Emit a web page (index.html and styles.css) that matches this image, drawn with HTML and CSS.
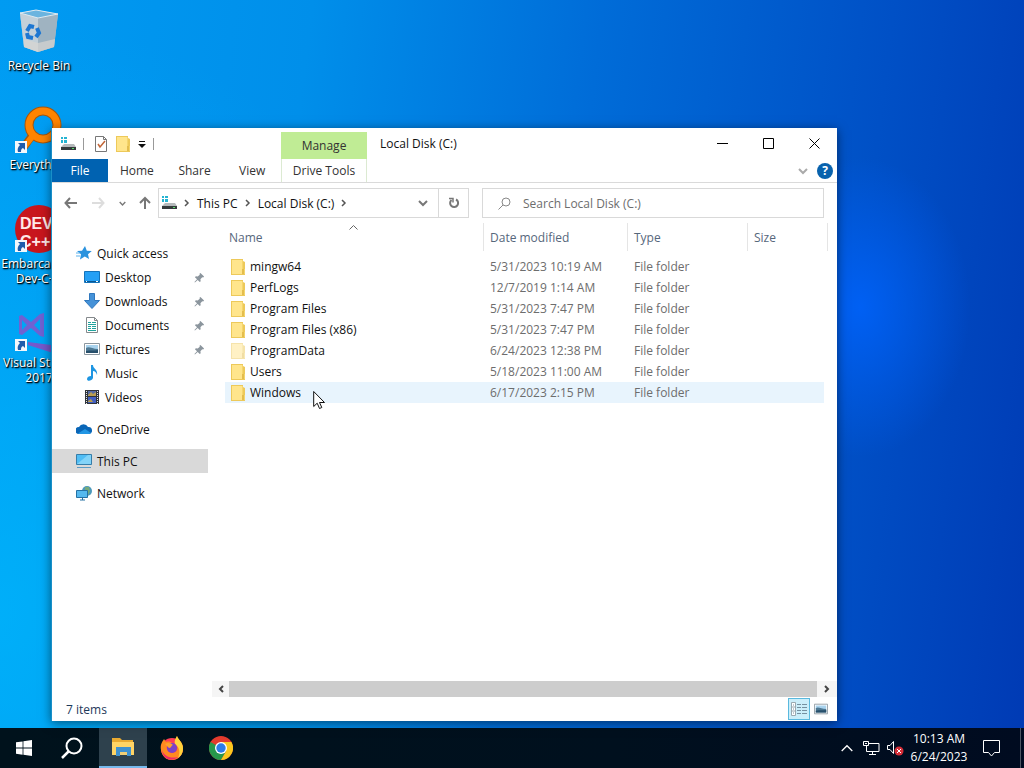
FILE: index.html
```
<!DOCTYPE html>
<html lang="en">
<head>
    <meta charset="UTF-8">
    <meta name="viewport" content="width=device-width, initial-scale=1.0">
    <title>Local Disk (C:)</title>
    <link rel="stylesheet" href="styles.css">
</head>
<body>
    <!-- shared icons -->
    <svg class="defs" aria-hidden="true">
        <symbol id="folder" viewBox="0 0 16 16">
            <path d="M1 0h12v2l2 1v13H1z" fill="#edc95a"/>
            <path d="M2 1h10v14H2z" fill="#ffe58c"/>
            <path d="M12 1h1v9h2v5h-3z" fill="#f5d66d"/>
            <path d="M12 10h2v5h-2z" fill="#e3bd4e"/>
        </symbol>
        <symbol id="drive" viewBox="0 0 16 16">
            <path d="M1 1h2v2H1zM4 1h3v2H4zM1 4h2v3H1zM4 4h3v3H4z" fill="#25b4d2"/>
            <path d="M4 8h10l2 3H1z" fill="#b5b9bb"/>
            <path d="M1 11h15v3H1z" fill="#353a3c"/>
            <path d="M12 12h2v1h-2z" fill="#58e06b"/>
        </symbol>
        <symbol id="pin" viewBox="0 0 12 12">
            <path d="M7 1l4 4-1 1-1-.3L7 8l.3 2-1 1L4 8.700 1 11.500l-.5-.5L3.300 8 1 5.700l1-1 2 .3L6.300 3 6 2z" fill="#8b959d"/>
        </symbol>
        <symbol id="arrow-box" viewBox="0 0 12 12">
            <path d="M0 0h12v12H0z" fill="#f4f7fb"/>
            <path d="M3 2h7v7L8 7c-2 1-2 2-2 4H3c-1-3 0-5 2-7z" fill="#1f5cab"/>
        </symbol>
        <symbol id="picture" viewBox="0 0 16 16">
            <path d="M.5 2.500h15v11H.5z" fill="#fff" stroke="#8c979f"/>
            <path d="M2 4h12v4H2z" fill="#a9d3ee"/>
            <path d="M2 7c3-2 6 1 12 1v4H2z" fill="#4d7893"/>
            <path d="M2 10c4-1 8 0 12-1v3H2z" fill="#274f6b"/>
        </symbol>
        <symbol id="chevron" viewBox="0 0 10 10">
            <path d="M1 3l4 4 4-4" fill="none" stroke="currentColor" stroke-width="2"/>
        </symbol>
        <symbol id="crumb" viewBox="0 0 6 8">
            <path d="M1 1l3 3-3 3" fill="none" stroke="#555" stroke-width="1.500"/>
        </symbol>
    </svg>

    <main class="desktop">
        <div class="shortcuts">
            <a class="shortcut" href="#">
                <svg width="48" height="48" viewBox="0 0 48 48">
                    <path d="M5 6l16-3 22 4-4 33-16 5-14-5z" fill="#aebfcb"/>
                    <path d="M5 6l18 4v35L9 40z" fill="#c3d0d9"/>
                    <path d="M23 10l20-3-4 33-16 5z" fill="#9fb3c1"/>
                    <path d="M5 6l16-3 22 4-20 4z" fill="#6bb4df" stroke="#dfeaf1"/>
                    <path d="M9 32l14 4 17-4-1 8-16 5-14-5z" fill="#d8d5d2" opacity=".7"/>
                    <g fill="none" stroke="#1d77d2" stroke-width="4">
                        <path d="M12 24l3-5 4 1"/>
                        <path d="M22 21l2 5-3 4"/>
                        <path d="M18 31l-5-1-1-4"/>
                    </g>
                </svg>
                <span>Recycle Bin</span>
            </a>
            <a class="shortcut" href="#">
                <svg width="48" height="48" viewBox="0 0 48 48">
                    <path d="M19 27L6 45" stroke="#a6560a" stroke-width="8"/>
                    <circle cx="28" cy="19" r="14" fill="none" stroke="#a6560a" stroke-width="9"/>
                    <path d="M20 27L6 45" stroke="#ff8400" stroke-width="6"/>
                    <circle cx="28" cy="19" r="14" fill="none" stroke="#ff8400" stroke-width="7"/>
                    <use href="#arrow-box" x="0" y="35" width="12" height="12"/>
                </svg>
                <span>Everything</span>
            </a>
            <a class="shortcut" href="#">
                <svg width="48" height="48" viewBox="0 0 48 48">
                    <circle cx="24" cy="24" r="24" fill="#c8161d"/>
                    <text x="5" y="24" class="dev-text">DEV</text>
                    <text x="5" y="42" class="dev-text">C++</text>
                    <use href="#arrow-box" x="0" y="35" width="12" height="12"/>
                </svg>
                <span>Embarcadero Dev-C++</span>
            </a>
            <a class="shortcut" href="#">
                <svg width="48" height="48" viewBox="0 0 48 48">
                    <path d="M4 12l3-1 9 7 9-8 4-1v24l-4-1-9-8-9 7-3-1zM7 16v10l5-5zM25 15l-6 6 6 6z" fill="#6f62d2" fill-rule="evenodd"/>
                    <path d="M13 38l23 3V6l8 4v36l-6 3-25-8z" fill="#7659cb"/>
                    <use href="#arrow-box" x="0" y="35" width="12" height="12"/>
                </svg>
                <span>Visual Studio 2017</span>
            </a>
        </div>

        <section class="window">
            <header class="ribbon">
                <div class="quick-bar">
                    <svg width="16" height="16"><use href="#drive"/></svg>
                    <i class="sep"></i>
                    <button aria-label="Properties">
                        <svg width="14" height="16" viewBox="0 0 14 16">
                            <path d="M1.500.5h8l3 3v12h-11z" fill="#fff" stroke="#777"/>
                            <path d="M9.500.5v3h3" fill="none" stroke="#777"/>
                            <path d="M4 8l2 3 5-6" fill="none" stroke="#c26536" stroke-width="1.500"/>
                        </svg>
                    </button>
                    <button aria-label="New folder"><svg width="16" height="16"><use href="#folder"/></svg></button>
                    <button aria-label="Customize toolbar">
                        <svg width="8" height="8" viewBox="0 0 8 8"><path d="M1 1h6v1H1zM0 4h8L4 8z" fill="#111"/></svg>
                    </button>
                    <i class="sep"></i>
                </div>
                <div class="manage">Manage</div>
                <h1>Local Disk (C:)</h1>
                <div class="controls">
                    <button aria-label="Minimize"><svg width="11" height="11"><path d="M0 5.500h11" stroke="#000"/></svg></button>
                    <button aria-label="Maximize"><svg width="11" height="11"><path d="M.5.5h10v10H.5z" fill="none" stroke="#000"/></svg></button>
                    <button aria-label="Close"><svg width="11" height="11"><path d="M.5.5l10 10m0-10l-10 10" stroke="#000"/></svg></button>
                </div>
                <div class="tabs">
                    <button class="file">File</button>
                    <button>Home</button>
                    <button>Share</button>
                    <button>View</button>
                </div>
                <button class="drive-tools">Drive Tools</button>
                <div class="help">
                    <button aria-label="Expand ribbon"><svg width="10" height="10"><use href="#chevron"/></svg></button>
                    <button class="help-btn" aria-label="Help">?</button>
                </div>
            </header>

            <div class="address-row">
                <div class="history">
                    <button aria-label="Back"><svg width="14" height="12" viewBox="0 0 14 12"><path d="M13 6H2M6 1L1.500 6 6 11" fill="none" stroke="#777" stroke-width="2"/></svg></button>
                    <button aria-label="Forward"><svg width="14" height="12" viewBox="0 0 14 12"><path d="M1 6h11M8 1l4.500 5L8 11" fill="none" stroke="#ddd" stroke-width="2"/></svg></button>
                    <button aria-label="Recent locations"><svg width="7" height="7"><use href="#chevron"/></svg></button>
                    <button aria-label="Up"><svg width="12" height="14" viewBox="0 0 12 14"><path d="M6 13V2M1 7l5-5 5 5" fill="none" stroke="#777" stroke-width="2"/></svg></button>
                </div>
                <div class="address">
                    <svg width="16" height="16"><use href="#drive"/></svg>
                    <svg width="6" height="8"><use href="#crumb"/></svg>
                    <a href="#">This PC</a>
                    <svg width="6" height="8"><use href="#crumb"/></svg>
                    <a href="#">Local Disk (C:)</a>
                    <svg width="6" height="8"><use href="#crumb"/></svg>
                    <button class="drop" aria-label="Previous locations"><svg width="10" height="10"><use href="#chevron"/></svg></button>
                    <button class="refresh" aria-label="Refresh">
                        <svg width="12" height="12" viewBox="0 0 12 12">
                            <path d="M8 2.500A4 4 0 1 1 3.500 3" fill="none" stroke="#777" stroke-width="2"/>
                            <path d="M1 1.500h4v4" fill="none" stroke="#777" stroke-width="1.500"/>
                        </svg>
                    </button>
                </div>
                <label class="search">
                    <svg width="13" height="13" viewBox="0 0 13 13">
                        <circle cx="8" cy="5" r="4" fill="none" stroke="#888"/>
                        <path d="M5 8l-4.500 4.500" stroke="#888"/>
                    </svg>
                    <input type="search" placeholder="Search Local Disk (C:)" aria-label="Search Local Disk (C:)">
                </label>
            </div>

            <div class="content">
                <nav class="tree">
                    <a href="#">
                        <svg width="16" height="16" viewBox="0 0 16 16"><path d="M9 1l1.800 4.700 5 .3-3.800 3.200L13 14l-4.200-2.400L4 14.500l1-5.300L1 6l5-.3z" fill="#2b93de"/><path d="M0 8h4M0 11h4" stroke="#5db2ec"/></svg>
                        <span>Quick access</span>
                    </a>
                    <a class="child" href="#">
                        <svg width="16" height="16" viewBox="0 0 16 16"><path d="M.5 2.500h15v11H.5z" fill="#25a0f5" stroke="#1473bb"/><path d="M1 12h14v1H1z" fill="#0a5792"/><path d="M2 12h1v1H2zM12 12h2v1h-2z" fill="#fff"/></svg>
                        <span>Desktop</span>
                        <svg class="pin" width="11" height="11"><use href="#pin"/></svg>
                    </a>
                    <a class="child" href="#">
                        <svg width="16" height="16" viewBox="0 0 16 16"><path d="M5.500.5h5v7h5L8 15.500.5 7.500h5z" fill="#4592d8" stroke="#3078be"/></svg>
                        <span>Downloads</span>
                        <svg class="pin" width="11" height="11"><use href="#pin"/></svg>
                    </a>
                    <a class="child" href="#">
                        <svg width="16" height="16" viewBox="0 0 16 16"><path d="M2.500.5h8l3 3v12h-11z" fill="#fff" stroke="#84898c"/><path d="M10.500.5v3h3" fill="none" stroke="#84898c"/><path d="M4 5.500h3M8 5.500h4M4 7.500h8M4 9.500h3M8 9.500h4M4 11.500h3M8 11.500h4M4 13.500h8" stroke="#1fa39d"/></svg>
                        <span>Documents</span>
                        <svg class="pin" width="11" height="11"><use href="#pin"/></svg>
                    </a>
                    <a class="child" href="#">
                        <svg width="16" height="16"><use href="#picture"/></svg>
                        <span>Pictures</span>
                        <svg class="pin" width="11" height="11"><use href="#pin"/></svg>
                    </a>
                    <a class="child" href="#">
                        <svg width="16" height="16" viewBox="0 0 16 16"><path d="M7 0h2c0 4 5 4 4 10-1-3-2-4-4-4v7c-1 3-6 4-6 1 0-2 2-3 4-3z" fill="#1d95e2"/></svg>
                        <span>Music</span>
                    </a>
                    <a class="child" href="#">
                        <svg width="16" height="16" viewBox="0 0 16 16"><path d="M1 1h14v14H1z" fill="#30343a"/><path d="M4 2h8v5H4z" fill="#566ca5"/><path d="M4 8h8v6H4z" fill="#425fc0"/><path d="M4 6l3-3 2 2 3-2v4H4zM4 12l3-2 2 3H4z" fill="#b99e50"/><path d="M2.500 2v13M13.500 2v13" stroke="#e5e7ea" stroke-dasharray="1 1"/></svg>
                        <span>Videos</span>
                    </a>
                    <a class="group" href="#">
                        <svg width="16" height="16" viewBox="0 0 16 16"><path d="M3 13a3.500 3.500 0 0 1 0-7 5 5 0 0 1 9 0 3.500 3.500 0 0 1 1 7z" fill="#0a66b7"/><path d="M2 12.500L9 8l6 4-2 1H3z" fill="#2196e4"/></svg>
                        <span>OneDrive</span>
                    </a>
                    <a class="group active" href="#">
                        <svg width="16" height="16" viewBox="0 0 16 16"><path d="M.5 1.500h15v10H.5z" fill="#50bdf4" stroke="#367da9"/><path d="M1 11L12 2h3v9z" fill="#82d3f8"/><path d="M1 14.500h14" stroke="#5c9cc5"/></svg>
                        <span>This PC</span>
                    </a>
                    <a class="group" href="#">
                        <svg width="16" height="16" viewBox="0 0 16 16"><circle cx="11" cy="6" r="5" fill="#4c99bb"/><path d="M9 2l4 0 1 4-2 4-3-4z" fill="#76aa7b"/><path d="M.5 5.500h11v7H.5z" fill="#55b9ef" stroke="#2672a4"/><path d="M4 15h5M6.500 13v2" stroke="#2672a4"/></svg>
                        <span>Network</span>
                    </a>
                </nav>

                <div class="list">
                    <table>
                        <thead>
                            <tr>
                                <th class="sorted">Name <svg width="9" height="5" viewBox="0 0 9 5"><path d="M.5 4.500l4-4 4 4" fill="none" stroke="#666"/></svg></th>
                                <th class="date">Date modified</th>
                                <th class="type">Type</th>
                                <th class="size">Size</th>
                            </tr>
                        </thead>
                        <tbody>
                            <tr><td><svg width="16" height="16"><use href="#folder"/></svg>mingw64</td><td>5/31/2023 10:19 AM</td><td>File folder</td><td></td></tr>
                            <tr><td><svg width="16" height="16"><use href="#folder"/></svg>PerfLogs</td><td>12/7/2019 1:14 AM</td><td>File folder</td><td></td></tr>
                            <tr><td><svg width="16" height="16"><use href="#folder"/></svg>Program Files</td><td>5/31/2023 7:47 PM</td><td>File folder</td><td></td></tr>
                            <tr><td><svg width="16" height="16"><use href="#folder"/></svg>Program Files (x86)</td><td>5/31/2023 7:47 PM</td><td>File folder</td><td></td></tr>
                            <tr class="hidden-item"><td><svg width="16" height="16"><use href="#folder"/></svg>ProgramData</td><td>6/24/2023 12:38 PM</td><td>File folder</td><td></td></tr>
                            <tr><td><svg width="16" height="16"><use href="#folder"/></svg>Users</td><td>5/18/2023 11:00 AM</td><td>File folder</td><td></td></tr>
                            <tr class="hover"><td><svg width="16" height="16"><use href="#folder"/></svg>Windows</td><td>6/17/2023 2:15 PM</td><td>File folder</td><td></td></tr>
                        </tbody>
                    </table>
                    <div class="scrollbar">
                        <button aria-label="Scroll left"><svg width="6" height="8" viewBox="0 0 6 8"><path d="M5 1L2 4l3 3" fill="none" stroke="#444" stroke-width="2"/></svg></button>
                        <div class="thumb"></div>
                        <button class="right" aria-label="Scroll right"><svg width="6" height="8" viewBox="0 0 6 8"><path d="M1 1l3 3-3 3" fill="none" stroke="#444" stroke-width="2"/></svg></button>
                    </div>
                </div>
            </div>

            <footer class="status">
                <span>7 items</span>
                <button class="selected" aria-label="Details view">
                    <svg width="16" height="14" viewBox="0 0 16 14"><path d="M.5.5h4v13h-4zM.5 5h4M.5 9h4" fill="#fff" stroke="#9aa9b1"/><path d="M2 3h1M2 7h1M2 11h1M6 2.500h4M11 2.500h5M6 5.500h4M11 5.500h5M6 8.500h4M11 8.500h5M6 11.500h4M11 11.500h5" stroke="#7590a0"/></svg>
                </button>
                <button aria-label="Large icons view"><svg width="14" height="14"><use href="#picture"/></svg></button>
            </footer>
        </section>

        <svg class="cursor" width="13" height="20" viewBox="0 0 13 20"><path d="M.7 1.500v15l3.500-3.300L6.500 18.500l2.300-1-2.300-5h5z" fill="#fff" stroke="#111"/></svg>
    </main>

    <footer class="taskbar">
        <button aria-label="Start"><svg width="16" height="16" viewBox="0 0 16 16"><path d="M0 2.300L6.600 1.400v6.200H0zM7.400 1.300L16 0v7.600H7.400zM0 8.400h6.600v6.300L0 13.800zM7.400 8.400H16V16l-8.600-1.200z" fill="#fff"/></svg></button>
        <button aria-label="Search"><svg width="22" height="22" viewBox="0 0 22 22"><circle cx="13" cy="9" r="7.500" fill="none" stroke="#fff" stroke-width="2"/><path d="M8 14l-7 7" stroke="#fff" stroke-width="2.500"/></svg></button>
        <button class="app running" aria-label="File Explorer">
            <svg width="22" height="20" viewBox="0 0 22 20"><path d="M0 1h8l2 2h11v15H0z" fill="#e9aa31"/><path d="M0 5h22v13H0z" fill="#ffd465"/><path d="M4 10h15v9h-4v-4H8v4H4z" fill="#3f91cf"/><path d="M8 15h7v3H8z" fill="#f2cf75"/></svg>
        </button>
        <button class="app" aria-label="Firefox">
            <svg width="24" height="24" viewBox="0 0 24 24">
                <circle cx="12" cy="13" r="11" fill="#ff3d55"/>
                <path d="M1 14C0 9 2 6 4 3l2 3c3-1 5 0 6 1-4 0-6 3-5 6 1 5 8 5 10 1 2-5-2-7-2-10l2-4c1 4 6 6 6 12 0 8-6 12-11 12C6 24 2 20 1 14z" fill="#ff8a20"/>
                <path d="M15 4l2-4c1 3 6 7 6 12 0 5-2 8-5 10 2-4 2-9-1-12-2-2-3-3-2-6z" fill="#ffd33c"/>
                <path d="M2 14c2 6 8 9 16 7-6 5-15 3-16-7z" fill="#f02a67"/>
                <circle cx="12" cy="12" r="5" fill="#7b42c7"/>
                <path d="M5 8c4-2 6-1 8 1-2 0-1 3-4 3z" fill="#ffa12b"/>
            </svg>
        </button>
        <button class="app" aria-label="Chrome">
            <svg width="24" height="24" viewBox="0 0 24 24">
                <circle cx="12" cy="12" r="12" fill="#e33b2e"/>
                <path d="M1.600 6A12 12 0 0 0 12 24l5.200-9-5.200-3z" fill="#27984b"/>
                <path d="M12 24A12 12 0 0 0 22.400 6H12l5.200 9z" fill="#fbc71e"/>
                <circle cx="12" cy="12" r="6" fill="#fff"/>
                <circle cx="12" cy="12" r="4.700" fill="#2d7ce8"/>
            </svg>
        </button>
        <div class="tray">
            <button aria-label="Show hidden icons"><svg width="12" height="8" viewBox="0 0 12 8"><path d="M.7 7L6 1.700 11.300 7" fill="none" stroke="#fff" stroke-width="1.300"/></svg></button>
            <button aria-label="Network"><svg width="17" height="15" viewBox="0 0 17 15"><path d="M6 2.500h10v8H3.500V5M9.500 11v3M6 13.500h7M.5.5h5v4h-5zM2 2.500h2" fill="none" stroke="#fff"/></svg></button>
            <button aria-label="Volume muted"><svg width="17" height="16" viewBox="0 0 17 16"><path d="M.5 5.500H3l3.500-4v12L3 9.500H.5z" fill="none" stroke="#fff"/><circle cx="12" cy="11" r="4.500" fill="#d52d37"/><path d="M10 9l4 4m0-4l-4 4" stroke="#fff"/></svg></button>
            <button class="clock"><span>10:13 AM</span><span>6/24/2023</span></button>
            <button class="notify" aria-label="Notifications"><svg width="17" height="17" viewBox="0 0 17 17"><path d="M.5.500h16v12h-5l-3 3.500-3-3.500h-5z" fill="none" stroke="#fff"/></svg></button>
            <button class="show-desktop" aria-label="Show desktop"></button>
        </div>
    </footer>
</body>
</html>
```
FILE: styles.css
```
* {
    padding: 0;
    margin: 0;
    box-sizing: border-box;
}

body {
    display: flex;
    flex-direction: column;
    height: 100vh;
    overflow: hidden;
    font-family: "Open Sans", "Noto Sans", sans-serif;
    font-size: 12px;
    line-height: 15px;
    color: #111;
    background:
        radial-gradient(ellipse 110px 150px at 84% 40%, rgba(0, 100, 255, 0.8), transparent),
        radial-gradient(ellipse 500px 600px at 0% 80%, rgba(0, 190, 255, 0.6), transparent),
        linear-gradient(97deg, #009bf2 0%, #008fea 28%, #006cd8 54%, #0050c6 80%, #003ab4 100%);
}

button {
    display: flex;
    align-items: center;
    justify-content: center;
    border: none;
    background: none;
    font: inherit;
    color: inherit;
}

a {
    color: inherit;
    text-decoration: none;
}

svg {
    display: block;
    flex-shrink: 0;
}

.defs {
    position: absolute;
    width: 0;
    height: 0;
}

.desktop {
    position: relative;
    flex: 1;
    min-height: 0;
}

/* desktop icons */
.shortcuts {
    display: flex;
    flex-direction: column;
    width: 78px;
    padding-top: 7px;
}

.shortcut {
    display: flex;
    flex-direction: column;
    align-items: center;
    gap: 3px;
    height: 99px;
    color: white;
    text-align: center;
    text-shadow: 1px 1px 2px black, 1px 1px 1px black;
}

.dev-text {
    font: bold 16px "Liberation Sans", sans-serif;
    fill: #ffe9e9;
    text-shadow: none;
}

/* explorer window */
.window {
    position: absolute;
    inset: 128px 187px 7px 51px;
    display: flex;
    flex-direction: column;
    background-color: white;
    border-left: 1px solid #1a8fc8;
    box-shadow: 0 2px 10px rgba(0, 0, 0, 0.5);
}

.ribbon {
    display: grid;
    grid-template-columns: 229px 86px 1fr auto;
    grid-template-rows: 31px 23px;
    border-bottom: 1px solid #dadada;
    color: #333;
}

.quick-bar {
    display: flex;
    align-items: center;
    gap: 7px;
    padding-left: 8px;
}

.sep {
    width: 1px;
    height: 12px;
    margin-right: 3px;
    background-color: #999;
}

.manage {
    display: flex;
    align-items: center;
    justify-content: center;
    margin-top: 4px;
    background-color: #c0ec95;
}

.ribbon h1 {
    padding-left: 13px;
    font-size: 12px;
    font-weight: normal;
    line-height: 31px;
    color: #111;
}

.controls {
    display: flex;
}

.controls button {
    width: 46px;
}

.tabs {
    display: flex;
}

.tabs button {
    flex: 1;
}

.tabs .file {
    flex: 0 0 56px;
    background-color: #0062b1;
    color: white;
}

.drive-tools {
    border: 1px solid #dcead2;
    border-width: 0 1px;
}

.help {
    grid-column: 3 / 5;
    display: flex;
    align-items: center;
    justify-content: flex-end;
    gap: 9px;
    padding-right: 4px;
    color: #aaa;
}

.help-btn {
    width: 16px;
    height: 16px;
    border-radius: 50%;
    background-color: #0862ad;
    color: white;
    font-weight: bold;
}

/* address bar */
.address-row {
    display: grid;
    grid-template-columns: 94px minmax(0, 311fr) minmax(0, 355fr);
    padding: 5px 13px 5px 12px;
    color: #777;
}

.history {
    display: flex;
    align-items: center;
    justify-content: space-between;
    margin-right: 7px;
}

.address {
    display: flex;
    align-items: center;
    gap: 7px;
    height: 30px;
    padding-left: 2px;
    border: 1px solid #d9d9d9;
    color: #111;
}

.address .drop {
    width: 30px;
    margin-left: auto;
    color: #777;
}

.address .refresh {
    align-self: stretch;
    width: 30px;
    margin-left: -7px;
    border-left: 1px solid #d9d9d9;
}

.search {
    display: flex;
    align-items: center;
    gap: 12px;
    margin-left: 13px;
    padding-left: 15px;
    border: 1px solid #d9d9d9;
}

.search input {
    flex: 1;
    min-width: 0;
    border: none;
    outline: none;
    font: inherit;
}

.search input::placeholder {
    color: #6d6d6d;
}

/* content */
.content {
    display: flex;
    flex: 1;
    min-height: 0;
}

.tree {
    width: 156px;
    padding-top: 18px;
    flex-shrink: 0;
}

.tree a {
    display: flex;
    align-items: center;
    gap: 5px;
    height: 24px;
    padding-left: 24px;
}

.tree .child {
    padding-left: 32px;
}

.tree .group {
    margin-top: 8px;
}

.tree .active {
    background-color: #d9d9d9;
}

.pin {
    margin-left: auto;
    margin-right: 3px;
}

.list {
    display: flex;
    flex: 1;
    flex-direction: column;
    justify-content: space-between;
    margin-left: 4px;
}

table {
    margin: 0 9px 0 13px;
    border-spacing: 0;
    table-layout: fixed;
}

th {
    height: 28px;
    border-right: 1px solid #e5e5e5;
    font-weight: normal;
    text-align: left;
    color: #56677c;
    padding-left: 6px;
}

.sorted {
    position: relative;
    padding-left: 4px;
}

.sorted svg {
    position: absolute;
    top: 2px;
    left: 50%;
    margin-left: -5px;
}

thead::after {
    content: "";
    display: block;
    height: 5px;
}

.date {
    width: 144px;
}

.type {
    width: 120px;
}

.size {
    width: 80px;
}

td {
    height: 21px;
    padding-left: 6px;
    color: #6d6d6d;
}

td:first-child {
    display: flex;
    align-items: center;
    gap: 4px;
    padding-left: 5px;
    color: #111;
}

td:last-child {
    border-right: 4px solid transparent;
    background-clip: padding-box;
}

.hidden-item svg {
    opacity: 0.5;
}

.hover td {
    background-color: #e8f4fd;
}

.scrollbar {
    display: flex;
    height: 16px;
    background-color: #f5f5f5;
}

.scrollbar button {
    width: 17px;
}

.scrollbar .right {
    width: 20px;
}

.thumb {
    flex: 1;
    background-color: #cdcdcd;
}

.status {
    display: flex;
    align-items: center;
    height: 24px;
    padding: 0 5px 0 14px;
    color: #1e395b;
}

.status span {
    flex: 1;
}

.status button {
    width: 22px;
    height: 22px;
}

.status .selected {
    border: 1px solid #5ab9de;
    background-color: #cbeefa;
}

.cursor {
    position: absolute;
    left: 313px;
    top: 390px;
}

/* taskbar */
.taskbar {
    display: flex;
    height: 40px;
    background: linear-gradient(90deg, #00121c, #00101e 60%, #000b20);
    color: white;
}

.taskbar > button {
    width: 48px;
}

.taskbar .app {
    margin-right: 1px;
}

.taskbar .running {
    margin-left: 3px;
    background-color: #2e414d;
    border-bottom: 2px solid #76b9ed;
}

.tray {
    display: flex;
    align-items: center;
    margin-left: auto;
}

.tray button {
    width: 24px;
    height: 40px;
}

.tray .clock {
    flex-direction: column;
    width: 64px;
    line-height: 18px;
}

.tray .notify {
    width: 40px;
}

.tray .show-desktop {
    width: 4px;
    margin-left: 9px;
    border-left: 1px solid #4d5663;
}
```
